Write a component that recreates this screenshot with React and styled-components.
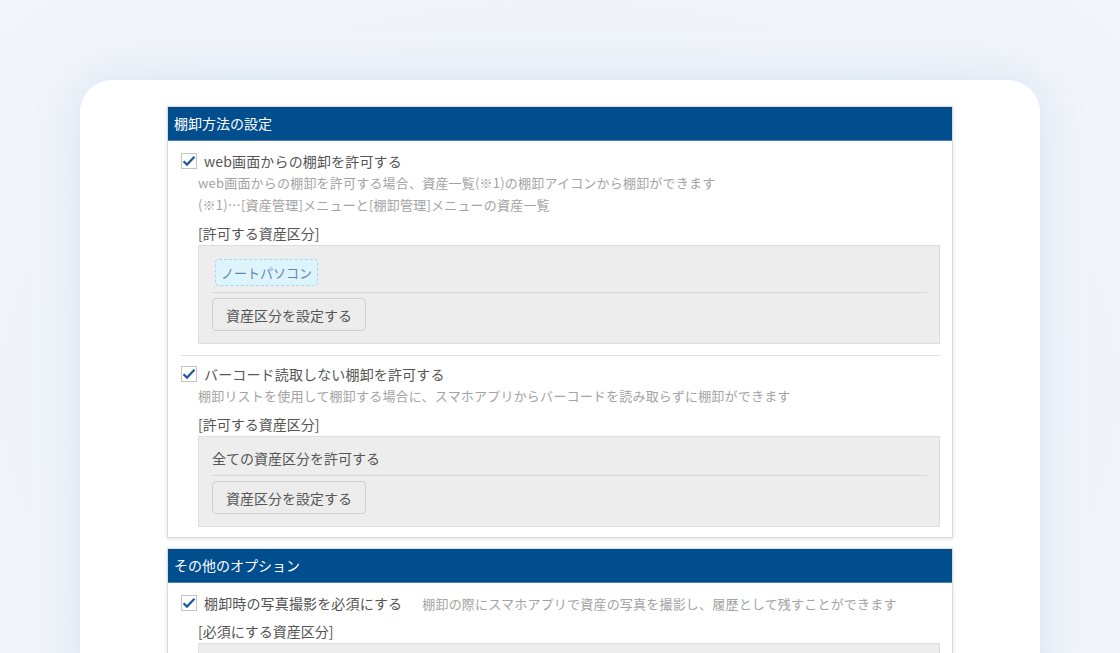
import React from "react";
import styled, { createGlobalStyle } from "styled-components";

const GlobalStyle = createGlobalStyle`
  html, body {
    margin: 0;
    padding: 0;
  }
  body {
    background: radial-gradient(ellipse at 50% 60%, #e6eef7 0%, #eef3f9 55%, #f2f5fa 100%);
    font-family: "Noto Sans CJK JP", "Liberation Sans", sans-serif;
    overflow: hidden;
  }
`;

const Page = styled.div`
  width: 1120px;
  height: 653px;
  padding: 80px 80px 0;
  box-sizing: border-box;
  overflow: hidden;
`;

const Card = styled.div`
  background: #ffffff;
  border-radius: 32px 32px 0 0;
  min-height: 620px;
  padding: 26px 87px 0;
  box-shadow: 0 0 40px rgba(170, 196, 226, 0.35);
`;

const Panel = styled.section`
  border: 1px solid #dcdcdc;
  background: #fff;
  box-shadow: 0 1px 4px rgba(0, 0, 0, 0.12);
  margin-bottom: 10px;
`;

const PanelHead = styled.h2`
  margin: 0;
  height: 33px;
  line-height: 33px;
  padding: 0 6px;
  background: #014e8f;
  color: #fff;
  font-size: 14px;
  font-weight: normal;
  border-bottom: 1px solid #4a7fb3;
`;

const PanelBody = styled.div`
  padding: 9px 12px 10px 13px;
`;

const Section = styled.div`
  padding-bottom: 11px;
  ${({ divided }) => divided && `
    border-top: 1px solid #e2e2e2;
    padding-top: 7px;
  `}
  ${({ last }) => last && `padding-bottom: 0;`}
`;

const CheckRow = styled.label`
  display: flex;
  align-items: center;
  gap: 7px;
  height: 22px;
  font-size: 14px;
  color: #555;
  letter-spacing: 0.15px;
`;

const Box = styled.span`
  width: 16px;
  height: 16px;
  box-sizing: border-box;
  border: 1px solid #c4c4c4;
  background: #fff;
  display: flex;
  align-items: center;
  justify-content: center;
  flex: none;
`;

const InlineNote = styled.span`
  margin-left: 13px;
  font-size: 13px;
  color: #a3a3a3;
  letter-spacing: 0.2px;
`;

const Indent = styled.div`
  padding-left: 17px;
`;

const Note = styled.p`
  margin: 0;
  font-size: 13px;
  line-height: 22px;
  color: #a3a3a3;
  letter-spacing: 0.2px;
`;

const SubLabel = styled.div`
  margin-top: 6px;
  font-size: 14px;
  line-height: 22px;
  color: #555;
`;

const GrayBox = styled.div`
  margin-top: 1px;
  background: #ededed;
  border: 1px solid #dedede;
  padding: 12px 12px 12px 13px;
  min-height: ${({ tall }) => (tall ? "80px" : "0")};
`;

const Tag = styled.span`
  display: inline-block;
  margin: 1px 3px;
  height: 27px;
  line-height: 25px;
  box-sizing: border-box;
  padding: 0 5px;
  border: 1px dashed #a8d6ee;
  border-radius: 4px;
  background: #def4fd;
  color: #5f86ad;
  font-size: 13px;
`;

const BoxText = styled.div`
  font-size: 14px;
  line-height: 18px;
  padding-bottom: 3px;
  color: #555;
`;

const Rule = styled.hr`
  border: 0;
  border-top: 1px solid #d6d6d6;
  margin: 5px 0;
`;

const Button = styled.button`
  height: 33px;
  padding: 0 13px;
  border: 1px solid #cfcfcf;
  border-radius: 4px;
  background: #ececec;
  color: #555;
  font-family: inherit;
  font-size: 14px;
`;

const Check = () => (
  <Box>
    <svg width="14" height="12" viewBox="0 0 14 12">
      <path d="M1.5 6.2 L5 9.6 L12.5 1.8" fill="none" stroke="#1d5a9c" strokeWidth="2.2" />
    </svg>
  </Box>
);

export default function App() {
  return (
    <>
      <GlobalStyle />
      <Page>
        <Card>
          <Panel>
            <PanelHead>棚卸方法の設定</PanelHead>
            <PanelBody>
              <Section>
                <CheckRow>
                  <Check />
                  web画面からの棚卸を許可する
                </CheckRow>
                <Indent>
                  <Note>web画面からの棚卸を許可する場合、資産一覧(※1)の棚卸アイコンから棚卸ができます</Note>
                  <Note>(※1)…[資産管理]メニューと[棚卸管理]メニューの資産一覧</Note>
                  <SubLabel>[許可する資産区分]</SubLabel>
                  <GrayBox>
                    <Tag>ノートパソコン</Tag>
                    <Rule />
                    <Button>資産区分を設定する</Button>
                  </GrayBox>
                </Indent>
              </Section>
              <Section divided last>
                <CheckRow>
                  <Check />
                  バーコード読取しない棚卸を許可する
                </CheckRow>
                <Indent>
                  <Note>棚卸リストを使用して棚卸する場合に、スマホアプリからバーコードを読み取らずに棚卸ができます</Note>
                  <SubLabel>[許可する資産区分]</SubLabel>
                  <GrayBox>
                    <BoxText>全ての資産区分を許可する</BoxText>
                    <Rule />
                    <Button>資産区分を設定する</Button>
                  </GrayBox>
                </Indent>
              </Section>
            </PanelBody>
          </Panel>
          <Panel>
            <PanelHead>その他のオプション</PanelHead>
            <PanelBody>
              <Section last>
                <CheckRow>
                  <Check />
                  棚卸時の写真撮影を必須にする
                  <InlineNote>棚卸の際にスマホアプリで資産の写真を撮影し、履歴として残すことができます</InlineNote>
                </CheckRow>
                <Indent>
                  <SubLabel>[必須にする資産区分]</SubLabel>
                  <GrayBox tall />
                </Indent>
              </Section>
            </PanelBody>
          </Panel>
        </Card>
      </Page>
    </>
  );
}
